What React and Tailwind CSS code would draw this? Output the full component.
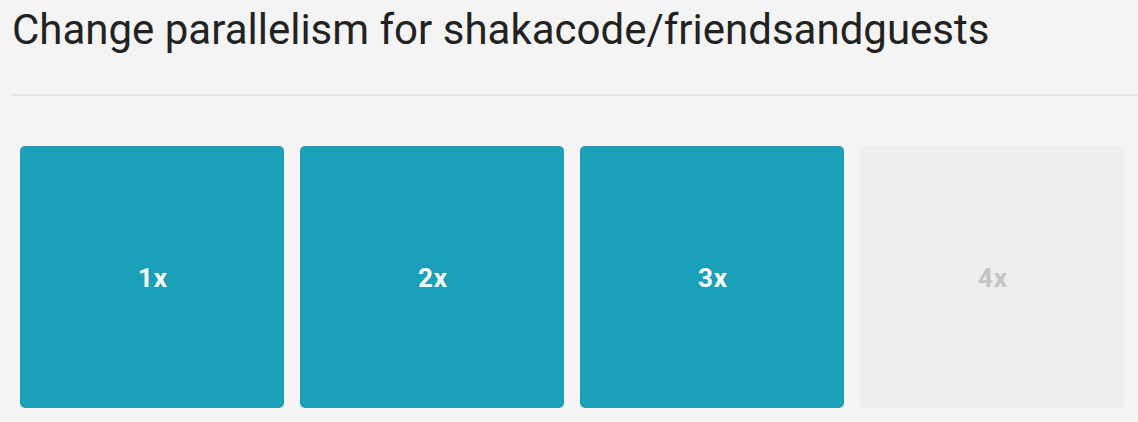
export default function App() {
  const options = [
    { label: '1x', active: true },
    { label: '2x', active: true },
    { label: '3x', active: true },
    { label: '4x', active: false },
  ];

  return (
    <div className="min-h-[422px] w-[1138px] bg-[#f4f4f4] font-['Roboto',sans-serif]">
      <div className="pl-3">
        <h1 className="h-[94px] pt-[2px] text-[42px] leading-[56px] text-[#222]">
          Change parallelism for shakacode/friendsandguests
        </h1>
        <div className="h-[2px] bg-[#e3e3e3]" />
      </div>
      <div className="flex gap-4 px-5 pt-[50px]">
        {options.map((o) => (
          <button
            key={o.label}
            className={
              'flex h-[262px] w-[264px] shrink-0 items-center justify-center rounded-[5px] pt-[3px] pl-[2px] text-[26px] font-bold tracking-[1px] ' +
              (o.active ? 'bg-[#1ba0b9] text-white' : 'bg-[#eeeeee] text-[#c4c4c4]')
            }
          >
            {o.label}
          </button>
        ))}
      </div>
    </div>
  );
}
